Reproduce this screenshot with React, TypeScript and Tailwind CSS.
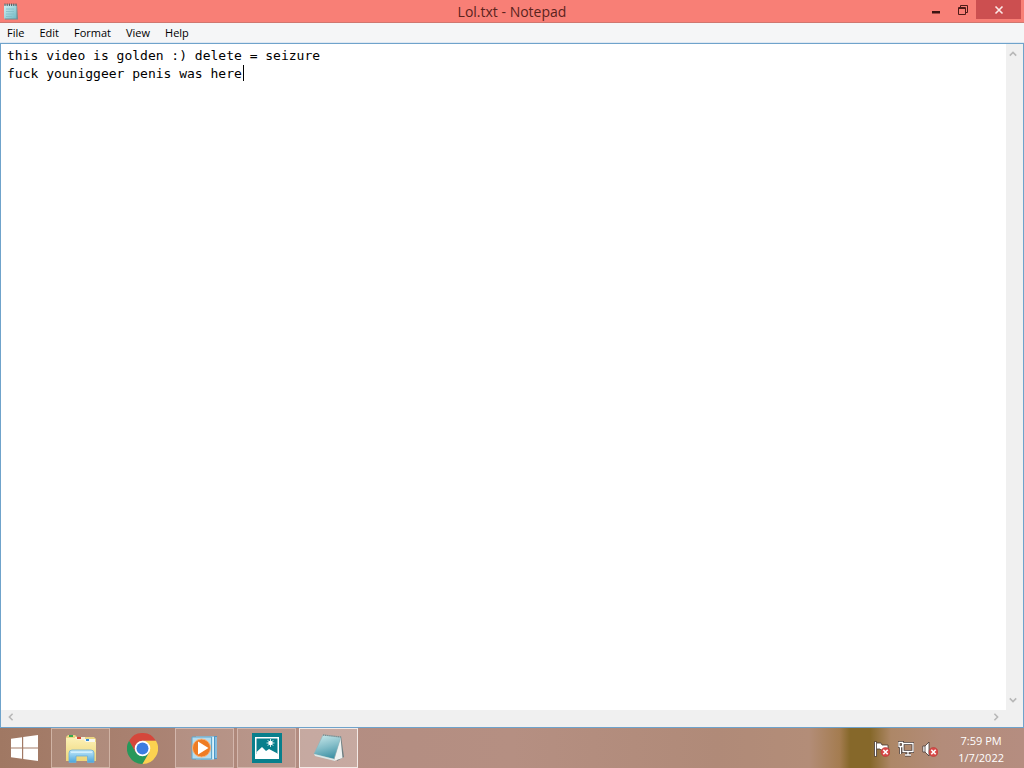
import React from "react";

const menus = ["File", "Edit", "Format", "View", "Help"];

const content = "this video is golden :) delete = seizure\nfuck youniggeer penis was here";

function NotepadSmall() {
  return (
    <svg viewBox="0 0 16 18" className="h-[18px] w-4" aria-hidden="true">
      <defs>
        <linearGradient id="pad-small" x1="0" y1="0" x2="1" y2="1">
          <stop offset="0" stopColor="#d5f1f3" />
          <stop offset="1" stopColor="#6fb9c4" />
        </linearGradient>
      </defs>
      <path d="M1 1.500H14L15 16.500H2Z" fill="#6d8c90" />
      <path d="M1 1.500H13.500V15.500H1Z" fill="url(#pad-small)" />
      <path d="M3 6H11M3 8.500H11M3 11H11M3 13.500H9" stroke="#82bdc5" strokeWidth=".8" />
      <path d="M2 .5V3M4.200 .5V3M6.400 .5V3M8.600 .5V3M10.800 .5V3M13 .5V3" stroke="#4f5558" strokeWidth="1" />
    </svg>
  );
}

function WindowsLogo() {
  return (
    <svg viewBox="0 0 27 26" className="h-[26px] w-[27px]" fill="#fff" aria-hidden="true">
      <path d="M0 3.700 11 2.200V12.400H0ZM12.200 2 27 0V12.400H12.200ZM0 13.600H11V23.800L0 22.300ZM12.200 13.600H27V26L12.200 24Z" />
    </svg>
  );
}

function ExplorerIcon() {
  return (
    <svg viewBox="0 0 32 30" className="h-[30px] w-8" aria-hidden="true">
      <defs>
        <linearGradient id="folder" x1="0" y1="0" x2="0" y2="1">
          <stop offset="0" stopColor="#fbf0b4" />
          <stop offset="1" stopColor="#edd578" />
        </linearGradient>
        <linearGradient id="stand" x1="0" y1="0" x2="0" y2="1">
          <stop offset="0" stopColor="#c5eafb" />
          <stop offset="1" stopColor="#4aa5dc" />
        </linearGradient>
      </defs>
      <path d="M1 4 3 2H10L12 4H29L31 6V28H1Z" fill="#ecd683" />
      <path d="M4 2H8V4H4Z" fill="#36a852" />
      <path d="M10 4H20V7H10Z" fill="#f7efd5" />
      <path d="M12 4H16V6H12Z" fill="#d64b38" />
      <path d="M19 6H30V9H19Z" fill="#f7f7ef" />
      <path d="M21 6H24V8H21Z" fill="#368bd0" />
      <path d="M1 5H10L12 7H19L21 9H31V28H1Z" fill="url(#folder)" />
      <path d="M4 29.500V20Q4 17 7 17H26Q29 17 29 20V29.500H22.500V23H11V29.500Z" fill="url(#stand)" stroke="#6dafd5" strokeWidth=".8" />
      <path d="M6 18.500H27V20H6Z" fill="#e3f7ff" opacity=".7" />
    </svg>
  );
}

function ChromeIcon() {
  return (
    <svg viewBox="0 0 48 48" className="h-[31px] w-[31px]" aria-hidden="true">
      <path d="M24 12H44.800A24 24 0 0 0 3.200 12L13.600 30Z" fill="#d5473b" />
      <path d="M13.600 30 3.200 12A24 24 0 0 0 24 48L34.400 30Z" fill="#27985a" />
      <path d="M34.400 30 24 48A24 24 0 0 0 44.800 12H24Z" fill="#fbd250" />
      <circle cx="24" cy="24" r="12" fill="#fff" />
      <circle cx="24" cy="24" r="9.300" fill="#3b7de0" />
    </svg>
  );
}

function MediaPlayerIcon() {
  return (
    <svg viewBox="0 0 28 26" className="h-[26px] w-7" aria-hidden="true">
      <path d="M7 2 26 1V24L10 25Z" fill="#4a97c8" />
      <path d="M5 1.500H23V24.500H5Z" fill="#c5e7f5" />
      <path d="M1 2H20.500V24H1Z" fill="#b4dcef" stroke="#5ea6cc" />
      <path d="M22.500 2V24M25 2V23" stroke="#e3f5fb" strokeWidth=".8" />
      <circle cx="10.500" cy="13" r="9" fill="#ee7c24" stroke="#f7b27a" />
      <path d="M7 6.500V19.500L17.500 13Z" fill="#fff" />
    </svg>
  );
}

function PhotosIcon() {
  return (
    <svg viewBox="0 0 30 30" className="h-[30px] w-[30px]" aria-hidden="true">
      <path d="M0 0H30V30H0Z" fill="#087f8c" />
      <path d="M3 4H27V26H3Z" fill="#fff" />
      <path d="M4.500 5.500H25.500V21H4.500Z" fill="#087f8c" />
      <path d="M4.500 22V19L10 14 14 18 17 16 25.500 20.500V22Z" fill="#fff" />
      <circle cx="18.500" cy="10" r="2.200" fill="#fff" />
      <path d="M18.500 6V14M14.500 10H22.500M15.700 7.200 21.300 12.800M21.300 7.200 15.700 12.800" stroke="#fff" strokeWidth=".8" />
    </svg>
  );
}

function NotepadIcon() {
  return (
    <svg viewBox="0 0 32 28" className="h-7 w-8" aria-hidden="true">
      <defs>
        <linearGradient id="pad" x1="0.300" y1="0" x2="0.600" y2="1">
          <stop offset="0" stopColor="#c3e5e8" />
          <stop offset="0.500" stopColor="#83bdc8" />
          <stop offset="1" stopColor="#3a8fa3" />
        </linearGradient>
      </defs>
      <path d="M28 2 31 23 24 27Z" fill="#6f7f82" />
      <path d="M27.500 3 29.500 24 21 27Z" fill="#eef3f2" />
      <path d="M10 1 28 3 21 25 1 20Z" fill="url(#pad)" stroke="#84b5bc" strokeWidth=".5" />
      <path d="M1 20 21 25 22 27 2 22Z" fill="#d8e8e8" />
      <path d="M10 1 28 3" stroke="#7b8a8c" strokeWidth="1.300" strokeDasharray="1.300 .8" />
    </svg>
  );
}

function ErrorBadge() {
  return (
    <g>
      <circle cx="11.500" cy="11" r="4.500" fill="#d84a48" stroke="#b93030" strokeWidth=".5" />
      <path d="M9.300 8.800 13.700 13.200M13.700 8.800 9.300 13.200" stroke="#fff" strokeWidth="1.600" />
    </g>
  );
}

function FlagIcon() {
  return (
    <svg viewBox="0 0 16 16" className="h-4 w-4" aria-hidden="true">
      <path d="M1.500 .5V15.500" stroke="#443632" strokeWidth="3" />
      <path d="M2.500 2H7L8 4H14V9H7L6 8H2.500Z" fill="#fff" stroke="#443632" strokeWidth=".8" />
      <path d="M1.500 1V15" stroke="#fff" strokeWidth="1.300" />
      <ErrorBadge />
    </svg>
  );
}

function NetworkIcon() {
  return (
    <svg viewBox="0 0 16 16" className="h-4 w-4" fill="none" aria-hidden="true">
      <path d="M5 2.500H15V10.500H5ZM10 11V14M7 14H13M2.500 6V13M1 1.500H4.500V5.500H1Z" stroke="#443632" strokeWidth="2.800" />
      <path d="M5 2.500H15V10.500H5ZM10 11V14M7 14H13M2.500 6V13M1 1.500H4.500V5.500H1Z" stroke="#fff" strokeWidth="1.300" />
    </svg>
  );
}

function VolumeIcon() {
  return (
    <svg viewBox="0 0 16 16" className="h-4 w-4" aria-hidden="true">
      <path d="M.8 5H3L7 1V15L3 11H.8Z" fill="#fff" stroke="#443632" strokeWidth=".8" />
      <path d="M3 5V11" stroke="#443632" strokeWidth=".8" />
      <ErrorBadge />
    </svg>
  );
}

function Chevron({ d }: { d: string }) {
  return (
    <svg viewBox="0 0 10 10" className="h-2 w-2" fill="none" stroke="#b8b8b8" strokeWidth="2" aria-hidden="true">
      <path d={d} />
    </svg>
  );
}

const apps = [
  { name: "File Explorer", icon: <ExplorerIcon />, style: "border-[#d0b3a4] bg-white/10" },
  { name: "Google Chrome", icon: <ChromeIcon />, style: "border-transparent" },
  { name: "Windows Media Player", icon: <MediaPlayerIcon />, style: "border-[#d3b6ac] bg-white/10" },
  { name: "Photos", icon: <PhotosIcon />, style: "border-[#d3b6ac] bg-white/10" },
  { name: "Notepad", icon: <NotepadIcon />, style: "border-[#f3e9e5] bg-white/25" },
];

export default function App() {
  return (
    <div className="flex h-screen flex-col overflow-hidden bg-[#a78170] font-['Open_Sans',sans-serif]">
      <main className="flex min-h-0 flex-1 flex-col bg-[#f5f6f7]">
        <header className="grid h-[23px] shrink-0 grid-cols-[1fr_auto_1fr] border-b border-[#d0776f] bg-[#f87f76]">
          <div className="flex items-center pl-[3px]">
            <NotepadSmall />
          </div>
          <h1 className="text-sm leading-[23px] text-[#5b231d]">Lol.txt - Notepad</h1>
          <div className="flex items-start justify-end pr-[3px]">
            <button aria-label="Minimize" className="flex h-[19px] w-[27px] items-center justify-center">
              <svg viewBox="0 0 10 10" className="h-2.5 w-2.5" aria-hidden="true">
                <path d="M0 6H8V8.500H0Z" fill="#3b1512" />
              </svg>
            </button>
            <button aria-label="Restore" className="flex h-[19px] w-[26px] items-center justify-center">
              <svg viewBox="0 0 10 10" className="h-2.5 w-2.5" fill="none" stroke="#4d1c18" aria-hidden="true">
                <path d="M.5 2.500H7.500V9.500H.5ZM.5 3.500H7.500M2.500 2V.5H9.500V7.500H8" />
              </svg>
            </button>
            <button aria-label="Close" className="flex h-[19px] w-[45px] items-center justify-center bg-[#cc4f50]">
              <svg viewBox="0 0 10 10" className="h-2.5 w-2.5" fill="none" stroke="#fbe9e7" strokeWidth="1.600" aria-hidden="true">
                <path d="M1.500 1.500 8.500 8.500M8.500 1.500 1.500 8.500" />
              </svg>
            </button>
          </div>
        </header>

        <nav className="flex h-5 shrink-0 items-center gap-px border-b border-[#dfe8f2]">
          {menus.map((m) => (
            <button key={m} className="px-[7px] text-[11px] leading-[18px] text-black">
              {m}
            </button>
          ))}
        </nav>

        <section className="grid min-h-0 flex-1 grid-cols-[1fr_17px] grid-rows-[1fr_17px] border border-[#6fa3cb] bg-[#f0f0f0]">
          <div className="relative flex min-h-0 min-w-0">
            <textarea
              aria-label="Lol.txt"
              wrap="off"
              spellCheck={false}
              defaultValue={content}
              className="min-w-0 flex-1 resize-none overflow-hidden bg-white px-1.5 py-[3px] font-['DejaVu_Sans_Mono',monospace] text-[13px] leading-[18px] text-black outline-none"
            />
            <span className="absolute top-[21px] left-[242px] h-4 w-px bg-black" />
          </div>
          <div className="flex flex-col items-center justify-between py-1.5 pr-1">
            <button aria-label="Scroll up">
              <Chevron d="M1 7 5 3 9 7" />
            </button>
            <button aria-label="Scroll down">
              <Chevron d="M1 3 5 7 9 3" />
            </button>
          </div>
          <div className="flex items-center justify-between px-1.5 pb-1">
            <button aria-label="Scroll left">
              <Chevron d="M7 1 3 5 7 9" />
            </button>
            <button aria-label="Scroll right">
              <Chevron d="M3 1 7 5 3 9" />
            </button>
          </div>
        </section>
      </main>

      <footer className="flex h-10 shrink-0 items-stretch justify-between bg-[linear-gradient(to_right,#a07863,#a8806f_12%,#b38d82_30%,#b58f82_50%,#b08a78_70%,#b38d78_79%,#a47c50_82%,#86682a_83%,#86682a_85%,#ad8767_87%,#b38c7a_92%,#b58d80)]">
        <div className="flex items-stretch gap-[3px]">
          <button aria-label="Start" className="flex w-12 items-center justify-center">
            <WindowsLogo />
          </button>
          {apps.map((a) => (
            <button key={a.name} aria-label={a.name} className={`flex w-[59px] items-center justify-center border ${a.style}`}>
              {a.icon}
            </button>
          ))}
        </div>
        <div className="flex items-center gap-5 pr-5 text-white">
          <div className="flex items-center gap-2 pt-0.5">
            <button aria-label="Action Center">
              <FlagIcon />
            </button>
            <button aria-label="Network">
              <NetworkIcon />
            </button>
            <button aria-label="Volume">
              <VolumeIcon />
            </button>
          </div>
          <time className="flex flex-col items-center pt-0.5 text-[11px] leading-[17px]">
            <span>7:59 PM</span>
            <span>1/7/2022</span>
          </time>
        </div>
      </footer>
    </div>
  );
}
